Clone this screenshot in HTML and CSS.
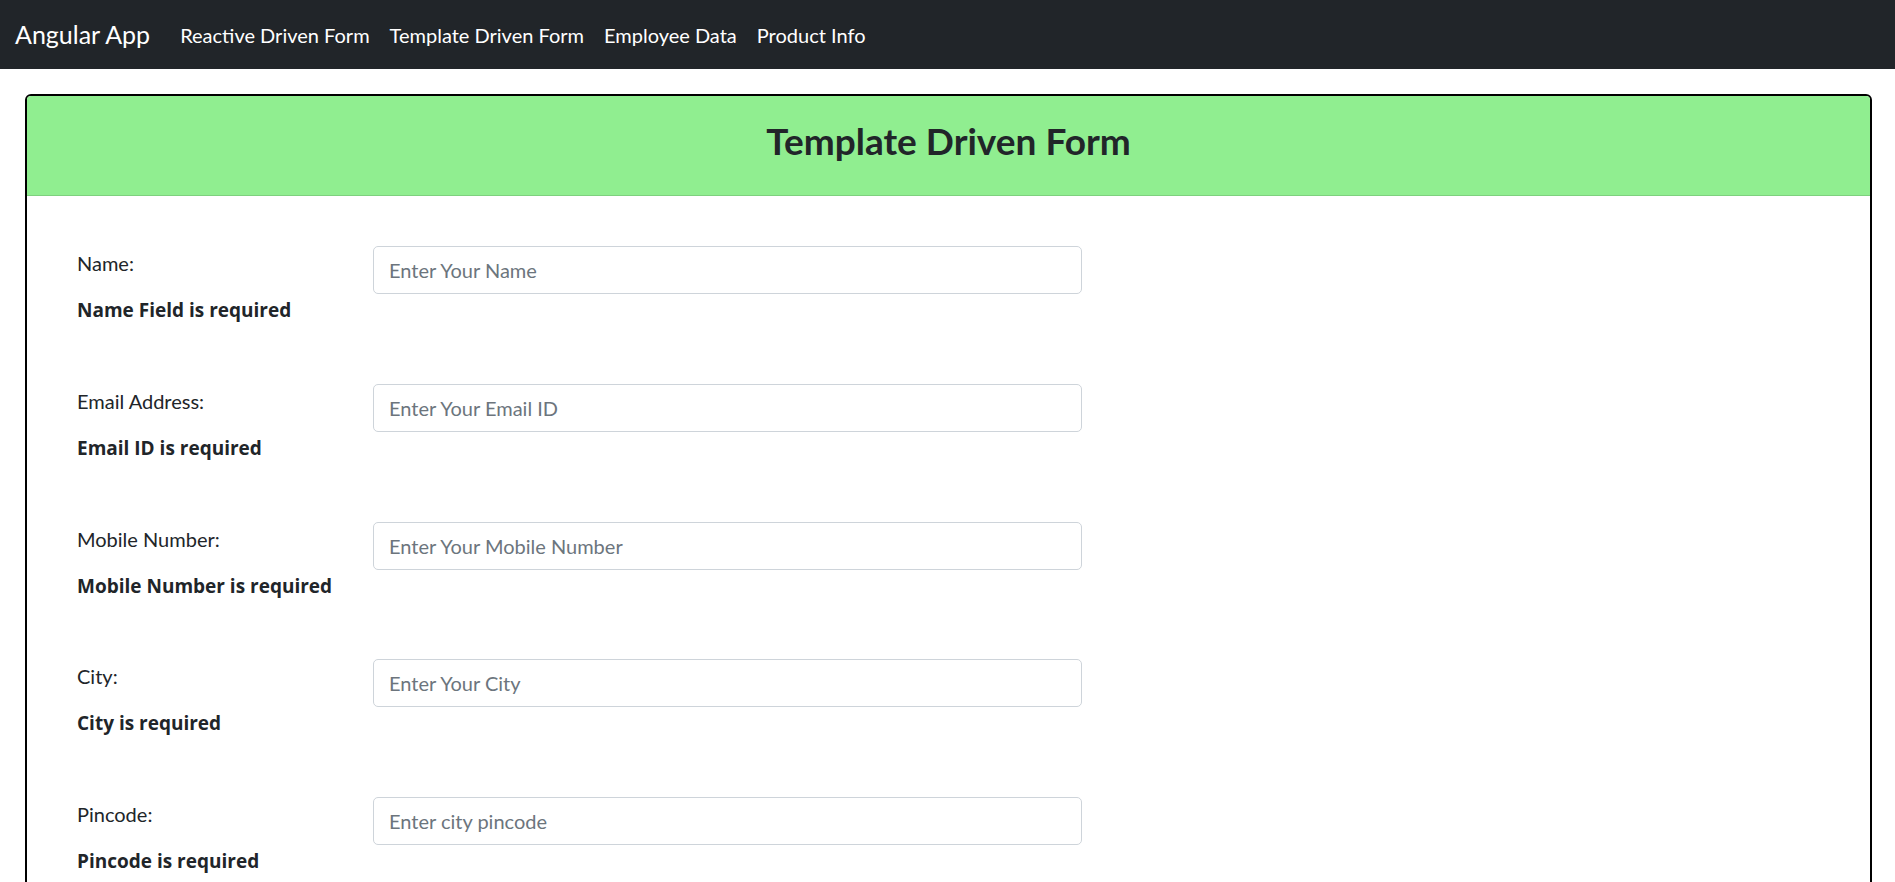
FILE: index.html
```html
<!DOCTYPE html>
<html lang="en">
<head>
<meta charset="utf-8">
<title>Angular App</title>
<link rel="stylesheet" href="styles.css">
</head>
<body>
<nav class="navbar">
  <a class="brand" href="#">Angular App</a>
  <ul class="nav-links">
    <li><a href="#">Reactive Driven Form</a></li>
    <li><a href="#">Template Driven Form</a></li>
    <li><a href="#">Employee Data</a></li>
    <li><a href="#">Product Info</a></li>
  </ul>
</nav>
<main class="page">
  <section class="card">
    <header class="card-header">
      <h3 class="card-title">Template Driven Form</h3>
    </header>
    <form class="card-body">
      <div class="form-row">
        <div class="label-col">
          <label class="field-label" for="name">Name:</label>
          <div class="error">Name Field is required</div>
        </div>
        <input class="form-control" id="name" type="text" placeholder="Enter Your Name">
      </div>
      <div class="form-row">
        <div class="label-col">
          <label class="field-label" for="email">Email Address:</label>
          <div class="error">Email ID is required</div>
        </div>
        <input class="form-control" id="email" type="text" placeholder="Enter Your Email ID">
      </div>
      <div class="form-row">
        <div class="label-col">
          <label class="field-label" for="mobile">Mobile Number:</label>
          <div class="error">Mobile Number is required</div>
        </div>
        <input class="form-control" id="mobile" type="text" placeholder="Enter Your Mobile Number">
      </div>
      <div class="form-row">
        <div class="label-col">
          <label class="field-label" for="city">City:</label>
          <div class="error">City is required</div>
        </div>
        <input class="form-control" id="city" type="text" placeholder="Enter Your City">
      </div>
      <div class="form-row">
        <div class="label-col">
          <label class="field-label" for="pincode">Pincode:</label>
          <div class="error">Pincode is required</div>
        </div>
        <input class="form-control" id="pincode" type="text" placeholder="Enter city pincode">
      </div>
    </form>
  </section>
</main>
</body>
</html>
```
FILE: styles.css
```css
* { box-sizing: border-box; }
html, body { margin: 0; padding: 0; }
body {
  font-family: "Lato", "Open Sans", sans-serif;
  font-size: 20px;
  line-height: 1.5;
  color: #212529;
  background: #fff;
}
.navbar {
  height: 69px;
  background: #212529;
  display: flex;
  align-items: center;
  padding: 0 15px;
}
.brand {
  color: #fff;
  text-decoration: none;
  font-size: 25px;
  margin-right: 20px;
}
.nav-links {
  display: flex;
  list-style: none;
  margin: 0;
  padding: 0;
}
.nav-links a {
  display: block;
  padding: 10px;
  color: #fff;
  text-decoration: none;
  font-size: 20px;
}
.page {
  padding: 25px 23px 0 25px;
}
.card {
  border: 2px solid #000;
  border-radius: 6px;
  overflow: hidden;
  min-height: 800px;
}
.card-header {
  background: #90ee90;
  height: 100px;
  padding-bottom: 8px;
  border-bottom: 1px solid rgba(0,0,0,0.125);
  display: flex;
  align-items: center;
  justify-content: center;
}
.card-title {
  margin: 0;
  font-size: 37px;
  font-weight: 700;
  line-height: 1.2;
}
.card-body {
  padding: 50px 0 0 50px;
}
.form-row {
  display: grid;
  grid-template-columns: 296px 709px;
  align-items: start;
  margin-bottom: 58.75px;
}
.field-label {
  display: block;
  line-height: 30px;
  padding-top: 2px;
}
.error {
  font-family: "Open Sans", "Lato", sans-serif;
  font-size: 19px;
  font-weight: 700;
  line-height: 30px;
  margin-top: 17px;
}
.form-control {
  display: block;
  width: 100%;
  height: 48px;
  padding: 7px 15px;
  font-family: inherit;
  font-size: 20px;
  color: #495057;
  border: 1px solid #ced4da;
  border-radius: 5px;
  background: #fff;
}
.form-control::placeholder {
  color: #6c757d;
  opacity: 1;
}
```
